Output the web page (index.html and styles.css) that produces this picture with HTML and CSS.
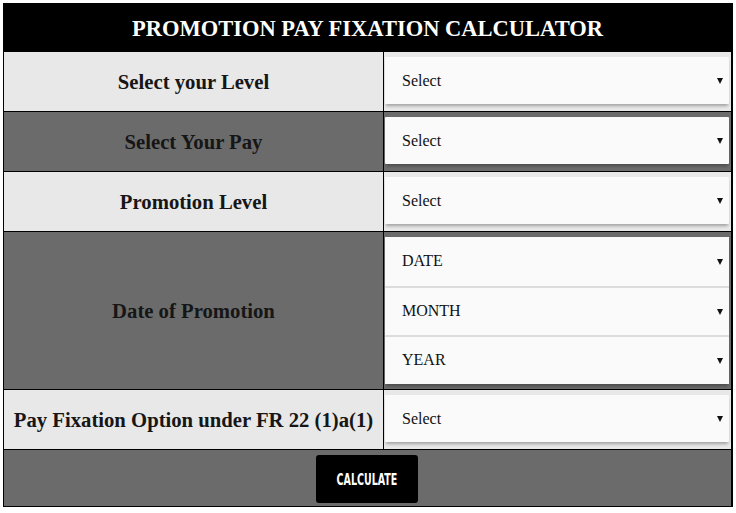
FILE: index.html
```html
<!DOCTYPE html>
<html lang="en">
<head>
<meta charset="utf-8">
<title>Promotion Pay Fixation Calculator</title>
<link rel="stylesheet" href="styles.css">
</head>
<body>
<div class="calc">
  <div class="title">PROMOTION PAY FIXATION CALCULATOR</div>
  <div class="row light first">
    <div class="label">Select your Level</div>
    <div class="field"><div class="select"><span>Select</span><i class="arrow"></i></div></div>
  </div>
  <div class="row dark">
    <div class="label">Select Your Pay</div>
    <div class="field"><div class="select"><span>Select</span><i class="arrow"></i></div></div>
  </div>
  <div class="row light">
    <div class="label">Promotion Level</div>
    <div class="field"><div class="select"><span>Select</span><i class="arrow"></i></div></div>
  </div>
  <div class="row dark tall">
    <div class="label">Date of Promotion</div>
    <div class="field">
      <div class="group">
        <div class="select stacked"><span>DATE</span><i class="arrow"></i></div>
        <div class="select stacked"><span>MONTH</span><i class="arrow"></i></div>
        <div class="select stacked"><span>YEAR</span><i class="arrow"></i></div>
      </div>
    </div>
  </div>
  <div class="row light">
    <div class="label">Pay Fixation Option under FR 22 (1)a(1)</div>
    <div class="field"><div class="select"><span>Select</span><i class="arrow"></i></div></div>
  </div>
  <div class="footer">
    <button class="btn"><span>CALCULATE</span></button>
  </div>
</div>
</body>
</html>
```
FILE: styles.css
```css
html, body {
  margin: 0;
  padding: 0;
  background: #ffffff;
}
body {
  padding: 3px 0 0 3px;
  font-family: "Liberation Serif", "Times New Roman", serif;
}
.calc {
  width: 730px;
  box-sizing: border-box;
  border: 1px solid #000;
  border-right-width: 2px;
}
.title {
  height: 48px;
  background: #000;
  color: #fff;
  font-weight: bold;
  font-size: 22.5px;
  display: flex;
  align-items: center;
  justify-content: center;
  padding-top: 1px;
  box-sizing: border-box;
}
.row {
  display: grid;
  grid-template-columns: 380px 1fr;
  border-top: 1px solid #000;
  height: 59px;
}
.row.first {
  border-top: none;
}
.row.tall {
  height: 157px;
}
.light { background: #e8e8e8; }
.dark { background: #6b6b6b; }
.label {
  border-right: 1px solid #000;
  display: flex;
  align-items: center;
  justify-content: center;
  font-weight: bold;
  font-size: 20.7px;
  color: #161616;
  white-space: nowrap;
  padding-top: 1px;
}
.field {
  padding: 5px 2px 0 1px;
}
.select {
  height: 47px;
  background: #fafafa;
  box-shadow: 0 3px 3px -1px rgba(0, 0, 0, 0.3);
  display: flex;
  align-items: center;
  justify-content: space-between;
  padding: 0 6px 0 17px;
  font-size: 16px;
  color: #111;
  border-radius: 1px;
}
.group {
  box-shadow: 0 3px 3px -1px rgba(0, 0, 0, 0.3);
  background: #fafafa;
}
.select.stacked {
  height: 49px;
  box-sizing: border-box;
  box-shadow: none;
  border-top: 2px solid #dcdcdc;
  padding-bottom: 1px;
}
.select.stacked:first-child {
  border-top: none;
  height: 49px;
}
.arrow {
  width: 0;
  height: 0;
  border-left: 3px solid transparent;
  border-right: 3px solid transparent;
  border-top: 6px solid #111;
  margin-top: 1px;
}
.footer {
  border-top: 1px solid #000;
  background: #6b6b6b;
  height: 57px;
  display: flex;
  justify-content: center;
  align-items: flex-start;
  padding-top: 5px;
  box-sizing: border-box;
}
.btn {
  width: 102px;
  height: 48px;
  margin-left: -1px;
  background: #000;
  border: none;
  border-radius: 3px;
  color: #fff;
  display: flex;
  align-items: center;
  justify-content: center;
  padding: 0;
}
.btn span {
  display: inline-block;
  font-family: "DejaVu Sans Condensed", "DejaVu Sans", sans-serif;
  font-stretch: condensed;
  font-weight: bold;
  font-size: 16px;
  transform: scaleX(0.66);
}
```
